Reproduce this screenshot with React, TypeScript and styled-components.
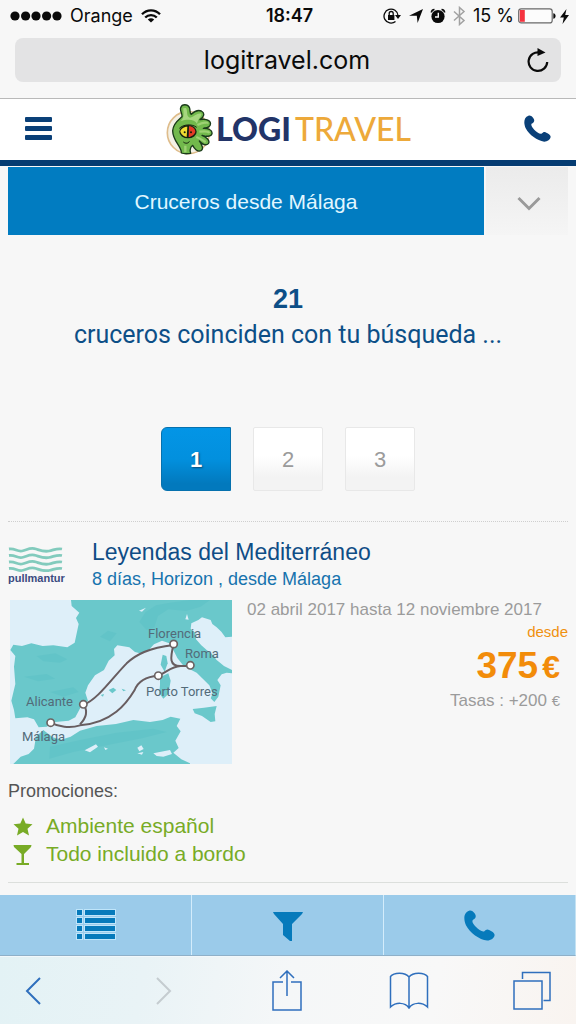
import React from "react";
import styled, { createGlobalStyle } from "styled-components";

const GlobalStyle = createGlobalStyle`
  *, *::before, *::after { box-sizing: border-box; }
  body {
    margin: 0;
    background: #f7f7f7;
    font-family: "Liberation Sans", Arial, sans-serif;
  }
  button, input { font: inherit; color: inherit; border: 0; padding: 0; background: none; }
  h1, h2, h3, p, ul { margin: 0; padding: 0; font-weight: 400; }
  ul { list-style: none; }
  a { color: inherit; text-decoration: none; }
  svg { display: block; flex: none; }
`;

const Page = styled.div`
  display: flex;
  flex-direction: column;
  min-height: 100vh;
`;

/* Browser chrome */

const BrowserBar = styled.header`
  height: 99px;
  padding: 0 15px;
  background: #f7f7f7;
  border-bottom: 1px solid #b9b9b9;
  font-family: Inter, "Liberation Sans", sans-serif;
  color: #0a0a0a;
`;

const StatusBar = styled.div`
  display: grid;
  grid-template-columns: 1fr auto 1fr;
  align-items: center;
  height: 32px;
  margin: 0 -8px 6px -5px;
  font-size: 18px;
  line-height: 32px;
`;

const StatusGroup = styled.div<{ $end?: boolean }>`
  display: flex;
  align-items: center;
  justify-content: ${(p) => (p.$end ? "flex-end" : "flex-start")};
  gap: ${(p) => (p.$end ? 7 : 8)}px;
`;

const Time = styled.span`
  font-weight: 600;
`;

const BatteryGroup = styled.span`
  display: flex;
  align-items: center;
  gap: 4px;
`;

const AddressBar = styled.div`
  display: flex;
  align-items: center;
  height: 44px;
  padding: 0 12px 0 32px;
  background: #e3e3e4;
  border-radius: 8px;
`;

const AddressInput = styled.input`
  flex: 1;
  min-width: 0;
  height: 44px;
  text-align: center;
  font-size: 25px;
  outline: 0;
`;

const PlainButton = styled.button`
  display: flex;
  align-items: center;
  justify-content: center;
  cursor: pointer;
`;

const BrowserTools = styled.nav`
  display: flex;
  align-items: center;
  justify-content: space-between;
  height: 68px;
  padding: 0 28px 0 25px;
  color: #2f6fbd;
  background: linear-gradient(100deg, #e3f2f5 0%, #e9f3f6 25%, #f5f7f8 50%, #f8f8f8 75%, #f9f4f0 100%);
  border-top: 1px solid #f2f8fb;
`;

const ToolButton = styled(PlainButton)`
  width: 32px;
  height: 48px;
  &:first-child {
    justify-content: flex-start;
  }
`;

/* Site header */

const SiteHeader = styled.header`
  display: flex;
  align-items: center;
  justify-content: space-between;
  height: 67px;
  padding: 0 25px 2px 24px;
  background: #fff;
  border-bottom: 6px solid #053c72;
  color: #0a4078;
`;

const Brand = styled.a`
  display: flex;
  align-items: center;
  font-family: Lato, sans-serif;
  font-size: 32px;
  line-height: 56px;
`;

const BrandName = styled.span<{ $accent?: boolean }>`
  margin-left: ${(p) => (p.$accent ? 4 : 2)}px;
  color: ${(p) => (p.$accent ? "#eda93a" : "#223468")};
  font-weight: ${(p) => (p.$accent ? 500 : 900)};
`;

/* Results */

const Main = styled.main`
  flex: 1;
  padding: 1px 8px 12px;
`;

const SearchSummary = styled.div`
  display: flex;
  height: 68px;
`;

const SearchTitle = styled.h1`
  flex: 1;
  margin-right: 2px;
  background: #017cc1;
  color: #e2f7ff;
  font-size: 21px;
  line-height: 70px;
  text-align: center;
`;

const ExpandButton = styled(PlainButton)`
  width: 82px;
  padding: 4px 0 0 4px;
  background: linear-gradient(#ebebeb, #f5f5f5);
  color: #9a9a9a;
`;

const ResultHeading = styled.h2`
  margin-top: 46px;
  text-align: center;
  color: #0d4f87;
  font-family: Roboto, sans-serif;
  font-size: 25px;
  line-height: 36px;
`;

const ResultCount = styled.strong`
  display: block;
  font-family: "Liberation Sans", Arial, sans-serif;
  font-size: 27px;
`;

const Pagination = styled.nav`
  display: flex;
  justify-content: center;
  gap: 22px;
  margin: 74px 0 30px;
`;

const PageLink = styled.a<{ $active?: boolean }>`
  width: 70px;
  height: 64px;
  border: 1px solid ${(p) => (p.$active ? "#0671ae" : "#e8e8e8")};
  border-radius: ${(p) => (p.$active ? "6px 0 0 6px" : "2px")};
  background: ${(p) =>
    p.$active
      ? "linear-gradient(#0395e6 0%, #0290de 50%, #0279bd 90%)"
      : "linear-gradient(#fff 45%, #f3f3f3 80%)"};
  color: ${(p) => (p.$active ? "#fff" : "#9b9b9b")};
  text-shadow: ${(p) => (p.$active ? "1px 1px 2px #064a75" : "none")};
  font-size: 22px;
  font-weight: ${(p) => (p.$active ? 700 : 400)};
  line-height: 64px;
  text-align: center;
`;

const Card = styled.article`
  padding: 16px 0 14px;
  border-top: 1px dotted #cfcfcf;
  border-bottom: 1px solid #dcdfdc;
`;

const CardHeader = styled.header`
  display: flex;
  align-items: center;
  gap: 29px;
`;

const Operator = styled.div`
  width: 55px;
  color: #3b4a80;
  font-size: 11px;
  font-weight: 700;
  line-height: 12px;
`;

const CruiseName = styled.h3`
  color: #0f4d86;
  font-size: 23px;
  line-height: 28px;
`;

const CruiseInfo = styled.p`
  color: #1673ae;
  font-size: 18px;
  line-height: 26px;
`;

const CardBody = styled.div`
  display: flex;
  gap: 15px;
  margin: 8px 0 0 2px;
`;

const Offer = styled.div`
  flex: 1;
  display: flex;
  flex-direction: column;
  color: #9b9b9b;
  text-align: right;
`;

const Dates = styled.p`
  font-size: 17px;
  line-height: 20px;
  text-align: left;
`;

const FromLabel = styled.p`
  color: #f0910f;
  font-size: 15px;
  line-height: 24px;
`;

const Price = styled.p`
  padding-right: 8px;
  color: #f28c0a;
  font-size: 37px;
  font-weight: 700;
  line-height: 44px;
`;

const PriceCurrency = styled.span`
  margin-left: 4px;
  font-size: 32px;
`;

const Taxes = styled.p`
  padding-right: 8px;
  font-size: 17px;
  line-height: 24px;
`;

const TaxCurrency = styled.span`
  font-size: 15px;
`;

const PromoTitle = styled.p`
  margin-top: 13px;
  color: #555;
  font-size: 18px;
  line-height: 28px;
`;

const PromoList = styled.ul`
  margin-top: 7px;
  color: #78ab26;
  font-size: 21px;
  line-height: 28px;
`;

const PromoItem = styled.li`
  display: flex;
  align-items: center;
  gap: 13px;
  padding-left: 5px;
`;

const ActionBar = styled.nav`
  display: flex;
  height: 61px;
  background: #9bcbea;
  border-right: 1px solid #c4e2f3;
  border-bottom: 1px solid #8fb0c8;
`;

const Action = styled(PlainButton)`
  flex: 1;
  color: #067abb;
  & + & {
    border-left: 1px solid #d3ecfb;
  }
`;

/* Drawings */

const SignalDots = () => (
  <svg width="52" height="10" viewBox="0 0 52 10" fill="currentColor" aria-hidden="true">
    {[5, 15.6, 26, 36.6, 47].map((x) => (
      <circle key={x} cx={x} cy="5" r="4.6" />
    ))}
  </svg>
);

const WifiIcon = () => (
  <svg width="20" height="14" viewBox="0 0 20 14" fill="none" stroke="currentColor" strokeWidth="2.3" aria-hidden="true">
    <path d="M1 5.2C6 0 14 0 19 5.2M4.2 8.5C7.4 5.2 12.6 5.2 15.8 8.5" />
    <path d="M10 13.6L6.8 10.4C8.6 8.8 11.4 8.8 13.2 10.4Z" fill="currentColor" stroke="none" />
  </svg>
);

const RotationLockIcon = () => (
  <svg width="19" height="16" viewBox="0 0 19 16" fill="none" stroke="currentColor" strokeWidth="1.3" aria-hidden="true">
    <path d="M12.5 13.5A7 7 0 1 1 15 7.5" />
    <path d="M12 7h6l-3 4z" fill="currentColor" stroke="none" />
    <rect x="5" y="7" width="6.4" height="5" fill="currentColor" stroke="none" />
    <path d="M6.2 7V5.5a2 2 0 0 1 4 0V7" />
  </svg>
);

const LocationIcon = () => (
  <svg width="14" height="14" viewBox="0 0 14 14" fill="currentColor" aria-hidden="true">
    <path d="M14 0L8.600 14L7.800 6.800L0 6.800Z" />
  </svg>
);

const AlarmIcon = () => (
  <svg width="16" height="16" viewBox="0 0 16 16" aria-hidden="true">
    <circle cx="8" cy="8.5" r="6.6" fill="currentColor" />
    <path d="M1.400 4.500C1.500 2.800 2.800 1.600 4.500 1.500M14.600 4.500C14.500 2.800 13.200 1.600 11.500 1.500" stroke="currentColor" strokeWidth="1.6" fill="none" />
    <path d="M8.300 4.800V9H5" stroke="#f7f7f7" strokeWidth="1.4" fill="none" />
  </svg>
);

const BluetoothIcon = () => (
  <svg width="13" height="20" viewBox="0 0 13 20" fill="none" stroke="#a2a2a2" strokeWidth="1.5" aria-hidden="true">
    <path d="M1 5.500L11 14.500L6.500 18.500V1.500L11 5.500L1 14.500" />
  </svg>
);

const BatteryIcon = () => (
  <svg width="38" height="16" viewBox="0 0 38 16" aria-hidden="true">
    <rect x=".7" y=".9" width="33.5" height="14" rx="2.5" fill="#fcfcfc" stroke="#686868" strokeWidth="1.2" />
    <rect x="1.8" y="2" width="5" height="11.8" fill="#f5333f" />
    <path d="M35.3 5.2c3 .5 3 5 0 5.500z" fill="currentColor" />
  </svg>
);

const BoltIcon = () => (
  <svg width="9" height="15" viewBox="0 0 9 15" fill="currentColor" aria-hidden="true">
    <path d="M6.500 0L0 8.500H3.800L2.500 15L9 6H5.200Z" />
  </svg>
);

const ReloadIcon = () => (
  <svg width="22" height="25" viewBox="0 0 22 25" fill="none" stroke="currentColor" strokeWidth="2.2" aria-hidden="true">
    <path d="M13 4.600A9.300 9.300 0 1 0 20.200 14" />
    <path d="M10.500 0L18.500 4.500L10.500 8Z" fill="currentColor" stroke="none" />
  </svg>
);

const MenuIcon = () => (
  <svg width="28" height="24" viewBox="0 0 28 24" fill="currentColor" aria-hidden="true">
    <rect x="1" y="0" width="27" height="5" rx="1" />
    <rect x="1" y="9" width="27" height="5" rx="1" />
    <rect x="1" y="18" width="27" height="5" rx="1" />
  </svg>
);

const PhoneIcon = ({ size }: { size: number }) => (
  <svg width={size} height={size} viewBox="708 54 79 79" fill="currentColor" aria-hidden="true">
    <path d="M721 56C729 53 737 63 738 69C738 75 734 77 731 79C727 83 731 90 738 97C745 104 755 111 760 108C764 104 767 102 772 105C778 108 786 112 786 118C785 126 777 132 767 132C747 130 723 112 713 93C707 80 706 61 721 56Z" />
  </svg>
);

const MascotIcon = () => (
  <svg width="49" height="52" viewBox="495 18 147 156" aria-hidden="true">
    <circle cx="565" cy="107" r="63" fill="#f4f1e6" stroke="#dfbd8c" strokeWidth="5" />
    <path
      d="M544 168C546 150 518 132 518 101C519 79 535 69 546 59C547 49 539 41 542 32C546 20 563 21 568 31C572 40 568 49 574 52C583 43 593 38 604 42C616 48 612 60 600 68C611 65 628 67 631 77C634 88 622 94 610 94C623 93 638 99 636 110C634 121 617 118 606 115C618 120 632 131 625 140C618 148 604 140 598 132C606 144 612 156 603 161C592 166 582 153 578 145C570 151 569 160 572 169C561 171 552 171 544 168Z"
      fill="#72b94c"
      stroke="#1a3a1a"
      strokeWidth="4"
      strokeLinejoin="round"
    />
    <path d="M550 34C550 54 554 60 542 73C565 64 585 69 591 80C594 64 606 57 604 50C590 47 583 60 570 62C557 58 564 42 558 33Z" fill="#a6d77f" />
    <path d="M592 84C611 74 623 76 622 80M598 104C614 102 626 104 628 108M589 120C601 124 611 132 617 135M556 146V166" stroke="#9ed174" strokeWidth="7" fill="none" />
    <ellipse cx="564" cy="104" rx="26" ry="20" fill="#15200f" />
    <path d="M562 89C550 89 541 97 541 104C545 114 553 119 560 120Z" fill="#f1dc31" />
    <path d="M567 88C578 88 586 96 586 105C583 113 574 120 566 120Z" fill="#e43b25" />
    <circle cx="554" cy="106" r="3" fill="#15200f" />
    <circle cx="573" cy="106" r="3" fill="#15200f" />
    <path d="M538 94C549 83 574 79 590 91M550 135C557 141 566 139 568 133" stroke="#15200f" strokeWidth="3" fill="none" />
  </svg>
);

const ChevronDown = () => (
  <svg width="24" height="15" viewBox="0 0 24 15" fill="none" stroke="currentColor" strokeWidth="3" aria-hidden="true">
    <path d="M1.500 2L12 12.500L22.500 2" />
  </svg>
);

const WavesIcon = () => (
  <svg width="55" height="25" viewBox="0 0 55 25" fill="none" stroke="#82cbbd" strokeWidth="2.8" aria-hidden="true">
    {[2, 8.5, 15, 21.5].map((y) => (
      <path key={y} d={`M1 ${y}C7 ${y - 1} 9 ${y + 3} 14 ${y + 2}S22 ${y - 2} 28 ${y}S36 ${y + 3} 41 ${y + 2}S49 ${y - 1} 54 ${y}`} />
    ))}
  </svg>
);

const StarIcon = () => (
  <svg width="20" height="20" viewBox="0 0 20 20" fill="currentColor" aria-hidden="true">
    <path d="M10 1.500L12.700 7.500L19.500 8.200L14.500 12.700L16 19.500L10 16L4 19.500L5.500 12.700L.5 8.200L7.300 7.500Z" />
  </svg>
);

const GlassIcon = () => (
  <svg width="20" height="22" viewBox="0 0 20 22" fill="currentColor" aria-hidden="true">
    <path d="M.5 2H18.500L18 4L11 11V20H16V22H3.500V20H8.500V11L1 4Z" />
  </svg>
);

const ListIcon = () => (
  <svg width="40" height="32" viewBox="0 0 40 32" fill="currentColor" stroke="#bfe5fa" strokeWidth="1" aria-hidden="true">
    {[0.5, 8.5, 16.5, 24.5].map((y) => (
      <g key={y}>
        <rect x=".5" y={y} width="6" height="6" />
        <rect x="8.5" y={y} width="31" height="6" />
      </g>
    ))}
  </svg>
);

const FunnelIcon = () => (
  <svg width="32" height="31" viewBox="0 0 32 31" fill="currentColor" aria-hidden="true">
    <path d="M1 2H31L30 4L20 14V31H18L11 25V14L2 4Z" />
  </svg>
);

const BackIcon = () => (
  <svg width="16" height="28" viewBox="0 0 16 28" fill="none" stroke="currentColor" strokeWidth="2" aria-hidden="true">
    <path d="M15 1L2 14L15 27" />
  </svg>
);

const ForwardIcon = () => (
  <svg width="16" height="28" viewBox="0 0 16 28" fill="none" stroke="#c5ccd0" strokeWidth="2" aria-hidden="true">
    <path d="M1 1L14 14L1 27" />
  </svg>
);

const ShareIcon = () => (
  <svg width="32" height="42" viewBox="0 0 32 42" fill="none" stroke="currentColor" strokeWidth="1.5" aria-hidden="true">
    <path d="M12 12H2V40H30V12H20M16 26V1M9 8L16 1L23 8" />
  </svg>
);

const BookIcon = () => (
  <svg width="40" height="38" viewBox="0 0 40 38" fill="none" stroke="currentColor" strokeWidth="1.5" aria-hidden="true">
    <path d="M20 5C16 0 5 0 1.500 4.500V35C7 30 16 30 20 36C24 30 33 30 38.500 35V4.500C35 0 24 0 20 5V36" />
  </svg>
);

const TabsIcon = () => (
  <svg width="40" height="40" viewBox="0 0 40 40" fill="none" stroke="currentColor" strokeWidth="1.5" aria-hidden="true">
    <rect x="2" y="10" width="28" height="28" />
    <path d="M10.500 8V1.500H38V29.500H31.500" />
  </svg>
);

const ports = [
  { name: "Florencia", x: 138, y: 38, px: 521, py: 342 },
  { name: "Roma", x: 175, y: 58, px: 571, py: 406 },
  { name: "Porto Torres", x: 136, y: 96, px: 475, py: 437 },
  { name: "Alicante", x: 16, y: 106, px: 250, py: 523 },
  { name: "Málaga", x: 12, y: 141, px: 152, py: 578 },
];

const RouteMap = () => (
  <svg width="222" height="164" viewBox="0 0 222 164" role="img" aria-label="Itinerario del crucero">
    <rect width="222" height="164" fill="#deeff9" />
    <g transform="scale(0.33333) translate(-30 -210)">
      <g fill="#6ac8cb">
        <path d="M213 210H696V320L676 322L664 305L650 292L637 282L632 270L606 262L595 270L574 280L572 296L586 308L588 328L604 346L620 360L636 372L650 390L672 408L696 420V430L680 428L665 433L652 450L662 466L655 500L643 516L632 505L638 490L628 466L606 444L590 428L568 417L548 404L532 384L520 360L508 340L486 332L462 343L444 362L426 371L405 366L388 352L352 346L342 357L344 376L326 392L312 420L285 436L264 466L256 488L264 513L242 532L226 562L206 572L166 576L140 590L116 592L102 568L82 562L46 565L42 540L34 512L46 462L42 410L46 378L31 360L40 344L66 348L94 340L128 348L160 346L202 352L224 338L236 282L228 264L238 248L215 228Z" />
        <path d="M40 702L62 680L86 672L102 656L108 620L130 600L158 622L184 629L212 620L240 602L290 588L348 582L400 570L450 576L488 570L512 560L541 566L530 588L542 604L526 632L536 654L520 668L544 688L570 700V702Z" />
        <path d="M488 374L499 378L503 400L494 425L482 404Z" />
        <path d="M480 442L505 430L512 452L505 492L490 506L478 490L480 464Z" />
        <path d="M578 537L612 533L650 528L644 552L646 574L632 576L606 558L584 550Z" />
        <path d="M326 480L340 473L349 480L337 490ZM365 476L378 481L370 484ZM302 495L312 492L309 500Z" />
      </g>
      <g fill="#52bcc3" opacity=".3">
        <path d="M436 247L468 226L510 218L570 210H630L602 230L558 243L505 238L474 258L463 292L440 300L418 276Z" />
        <path d="M110 378L166 370L202 388L180 398L130 394ZM72 440L140 432L166 446L114 454ZM150 486L220 472L236 486L190 500ZM300 320L324 302L350 310L330 334Z" />
        <path d="M150 650L240 630L350 608L460 596L500 606L426 625L320 646L220 666L148 686Z" />
      </g>
      <g fill="#deeff9">
        <path d="M417 242L438 233L426 245ZM556 268L561 252L566 269ZM254 661L288 643L294 650L270 667ZM312 652L324 656L316 660ZM412 653L424 646L431 657L418 664ZM412 670L430 666L426 674ZM460 670L510 660L516 672L490 680L470 678Z" />
      </g>
      <g fill="none" stroke="#685d60" strokeWidth="6">
        <path d="M521 345C445 354 408 374 380 400C340 440 292 510 252 523C263 545 260 562 240 583" />
        <path d="M521 342C510 385 508 409 542 408H571M542 408C514 409 502 425 475 437C434 440 412 459 404 480C380 520 336 579 240 586C210 596 174 590 152 578" />
      </g>
      {ports.map((p) => (
        <circle key={p.name} cx={p.px} cy={p.py} r="11" fill="#fff" stroke="#6b6363" strokeWidth="5" />
      ))}
    </g>
    <g fill="#536b79" fontFamily="Roboto, sans-serif" fontSize="13">
      {ports.map((p) => (
        <text key={p.name} x={p.x} y={p.y}>{p.name}</text>
      ))}
    </g>
  </svg>
);

const pages = [1, 2, 3];

export default function App() {
  return (
    <Page>
      <GlobalStyle />
      <BrowserBar>
        <StatusBar>
          <StatusGroup>
            <SignalDots />
            <span>Orange</span>
            <WifiIcon />
          </StatusGroup>
          <Time>18:47</Time>
          <StatusGroup $end>
            <RotationLockIcon />
            <LocationIcon />
            <AlarmIcon />
            <BluetoothIcon />
            <BatteryGroup>
              <span>15 %</span>
              <BatteryIcon />
              <BoltIcon />
            </BatteryGroup>
          </StatusGroup>
        </StatusBar>
        <AddressBar>
          <AddressInput type="text" aria-label="Dirección" defaultValue="logitravel.com" />
          <PlainButton type="button" aria-label="Recargar">
            <ReloadIcon />
          </PlainButton>
        </AddressBar>
      </BrowserBar>

      <SiteHeader>
        <PlainButton type="button" aria-label="Menú">
          <MenuIcon />
        </PlainButton>
        <Brand href="#">
          <MascotIcon />
          <BrandName>LOGI</BrandName>
          <BrandName $accent>TRAVEL</BrandName>
        </Brand>
        <PlainButton type="button" aria-label="Llamar">
          <PhoneIcon size={27} />
        </PlainButton>
      </SiteHeader>

      <Main>
        <SearchSummary>
          <SearchTitle>Cruceros desde Málaga</SearchTitle>
          <ExpandButton type="button" aria-label="Modificar búsqueda">
            <ChevronDown />
          </ExpandButton>
        </SearchSummary>

        <ResultHeading>
          <ResultCount>21</ResultCount>
          cruceros coinciden con tu búsqueda ...
        </ResultHeading>

        <Pagination aria-label="Páginas">
          {pages.map((n) => (
            <PageLink key={n} href="#" $active={n === 1}>
              {n}
            </PageLink>
          ))}
        </Pagination>

        <Card>
          <CardHeader>
            <Operator>
              <WavesIcon />
              pullmantur
            </Operator>
            <div>
              <CruiseName>
                <a href="#">Leyendas del Mediterráneo</a>
              </CruiseName>
              <CruiseInfo>8 días, Horizon , desde Málaga</CruiseInfo>
            </div>
          </CardHeader>
          <CardBody>
            <RouteMap />
            <Offer>
              <Dates>02 abril 2017 hasta 12 noviembre 2017</Dates>
              <FromLabel>desde</FromLabel>
              <Price>
                375<PriceCurrency>€</PriceCurrency>
              </Price>
              <Taxes>
                Tasas : +200 <TaxCurrency>€</TaxCurrency>
              </Taxes>
            </Offer>
          </CardBody>
          <PromoTitle>Promociones:</PromoTitle>
          <PromoList>
            <PromoItem>
              <StarIcon />
              Ambiente español
            </PromoItem>
            <PromoItem>
              <GlassIcon />
              Todo incluido a bordo
            </PromoItem>
          </PromoList>
        </Card>
      </Main>

      <ActionBar aria-label="Acciones">
        <Action type="button" aria-label="Ordenar">
          <ListIcon />
        </Action>
        <Action type="button" aria-label="Filtrar">
          <FunnelIcon />
        </Action>
        <Action type="button" aria-label="Llamar">
          <PhoneIcon size={31} />
        </Action>
      </ActionBar>

      <BrowserTools aria-label="Navegador">
        <ToolButton type="button" aria-label="Atrás">
          <BackIcon />
        </ToolButton>
        <ToolButton type="button" aria-label="Adelante">
          <ForwardIcon />
        </ToolButton>
        <ToolButton type="button" aria-label="Compartir">
          <ShareIcon />
        </ToolButton>
        <ToolButton type="button" aria-label="Marcadores">
          <BookIcon />
        </ToolButton>
        <ToolButton type="button" aria-label="Pestañas">
          <TabsIcon />
        </ToolButton>
      </BrowserTools>
    </Page>
  );
}
